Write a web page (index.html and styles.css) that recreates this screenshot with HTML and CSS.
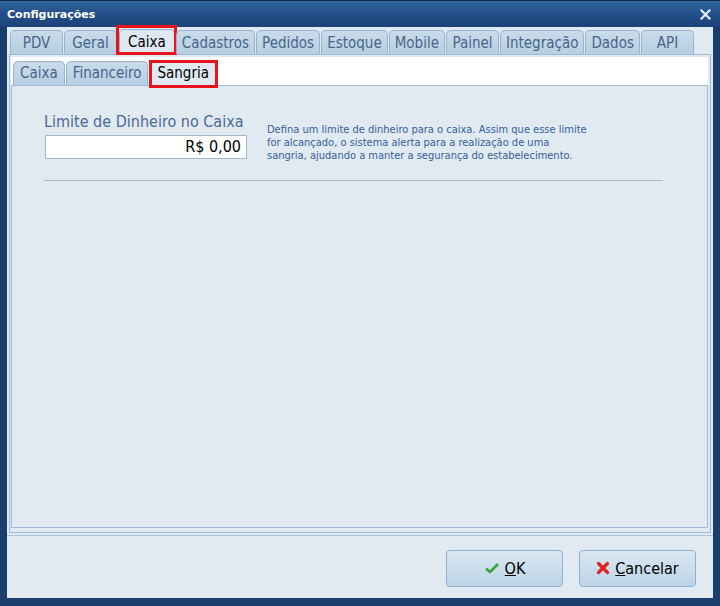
FILE: index.html
```html
<!DOCTYPE html>
<html lang="pt-BR">
<head>
    <meta charset="UTF-8">
    <title>Configurações</title>
    <link rel="stylesheet" href="styles.css">
</head>
<body>
<div class="window">
    <div class="titlebar">
        <span class="title">Configurações</span>
        <svg class="close" width="11" height="11" viewBox="0 0 11 11"><path d="M1.5 1.5 L9.5 9.5 M9.5 1.5 L1.5 9.5" stroke="#e8eef5" stroke-width="2.2" stroke-linecap="square"/></svg>
    </div>
    <div class="client">
        <div class="tabs">
            <span class="tab">PDV</span>
            <span class="tab">Geral</span>
            <span class="tab active mark">Caixa</span>
            <span class="tab">Cadastros</span>
            <span class="tab">Pedidos</span>
            <span class="tab">Estoque</span>
            <span class="tab">Mobile</span>
            <span class="tab">Painel</span>
            <span class="tab">Integração</span>
            <span class="tab">Dados</span>
            <span class="tab">API</span>
        </div>
        <div class="panel">
            <div class="subtabs">
                <span class="subtab">Caixa</span>
                <span class="subtab">Financeiro</span>
                <span class="subtab active mark">Sangria</span>
            </div>
            <div class="subpanel">
                <div class="row">
                    <div class="field">
                        <label class="label">Limite de Dinheiro no Caixa</label>
                        <div class="input">R$ 0,00</div>
                    </div>
                    <p class="hint">Defina um limite de dinheiro para o caixa. Assim que esse limite<br>for alcançado, o sistema alerta para a realização de uma<br>sangria, ajudando a manter a segurança do estabelecimento.</p>
                </div>
                <div class="sep"></div>
            </div>
        </div>
        <div class="footer">
            <button class="btn">
                <svg width="16" height="14" viewBox="0 0 16 14"><path d="M2 7.5 L6 11 L14 3" fill="none" stroke="#3aa535" stroke-width="2.6" stroke-linejoin="round"/></svg>
                <span><u>O</u>K</span>
            </button>
            <button class="btn">
                <svg width="14" height="14" viewBox="0 0 14 14"><path d="M2.5 2.5 L11.5 11.5 M11.5 2.5 L2.5 11.5" fill="none" stroke="#e0231e" stroke-width="3.2" stroke-linecap="round"/></svg>
                <span><u>C</u>ancelar</span>
            </button>
        </div>
    </div>
</div>
</body>
</html>
```

FILE: styles.css
```css
*{
    margin: 0;
    padding: 0;
    box-sizing: border-box;
}
body{
    background-color: #1b3d6b;
    font-family: "DejaVu Sans Condensed", "DejaVu Sans", sans-serif;
}
.window{
    width: 720px;
    height: 606px;
    display: flex;
    flex-direction: column;
    background-color: #1b3d6b;
    border-top: 1px solid #0f2a50;
}
.titlebar{
    height: 26px;
    display: flex;
    align-items: center;
    justify-content: space-between;
    padding: 0 9px 0 7px;
    background: linear-gradient(#3467a0, #24508a 45%, #1c4379);
}
.title{
    color: white;
    font-family: "DejaVu Sans", sans-serif;
    font-weight: bold;
    font-size: 11px;
}
.client{
    flex: 1;
    margin: 0 7px 8px 7px;
    background-color: #e1e9f1;
    display: flex;
    flex-direction: column;
}
.tabs{
    display: flex;
    padding: 3px 0 0 3px;
    height: 27px;
}
.tab{
    position: relative;
    min-width: 53px;
    height: 24px;
    padding: 0 5px;
    margin-right: 1px;
    text-align: center;
    font-size: 15px;
    line-height: 24px;
    color: #46648a;
    background: linear-gradient(#c9dbe9, #b7cfe2);
    border: 1px solid #93b3cf;
    border-bottom: none;
    border-radius: 5px 5px 0 0;
}
.tab.active{
    background: #dfe8f1;
    color: black;
    height: 25px;
    padding: 0 8px;
    margin: -1px 1px 0 1px;
}
/* red highlight box drawn over the tab */
.mark::after{
    content: "";
    position: absolute;
    border: 3px solid #e8141c;
}
.tab.mark::after{
    top: -5px;
    left: -4px;
    right: -3px;
    bottom: -1px;
}
.subtab.mark::after{
    top: -2px;
    left: -2px;
    right: -3px;
    bottom: -3px;
}
.panel{
    flex: 1;
    margin: 0 2px 0 2px;
    border: 1px solid #9dbbd6;
    padding: 2px 2px 4px 1px;
    display: flex;
    flex-direction: column;
}
.subtabs{
    background-color: white;
    height: 28px;
    display: flex;
    align-items: flex-end;
    padding-left: 2px;
}
.subtab{
    position: relative;
    height: 24px;
    padding: 0 6px;
    margin-right: 1px;
    font-size: 15px;
    line-height: 23px;
    color: #46648a;
    background: linear-gradient(#c9dbe9, #b7cfe2);
    border: 1px solid #93b3cf;
    border-bottom: none;
    border-radius: 5px 5px 0 0;
}
.subtab.active{
    background: #e1e9f1;
    color: black;
    margin-left: 1px;
}
.subpanel{
    flex: 1;
    background-color: #e1e9f1;
    border: 1px solid #9dbbd6;
    padding: 26px 0 0 32px;
}
.row{
    display: flex;
}
.field{
    width: 203px;
}
.label{
    display: block;
    font-size: 16px;
    line-height: 20px;
    color: #4a6a96;
    height: 23px;
}
.input{
    height: 24px;
    background-color: white;
    border: 1px solid #9fb8d0;
    text-align: right;
    padding-right: 5px;
    font-size: 16px;
    line-height: 22px;
    color: black;
    margin-left: 1px;
}
.hint{
    margin: 11px 0 0 20px;
    font-size: 11px;
    line-height: 13px;
    color: #33609a;
}
.sep{
    width: 619px;
    margin-top: 18px;
    border-top: 1px solid #a3bdd6;
}
.footer{
    height: 63px;
    border-top: 1px solid #a8c2da;
    margin-top: 2px;
    display: flex;
    justify-content: flex-end;
    align-items: center;
    gap: 16px;
    padding: 2px 17px 0 0;
}
.btn{
    width: 117px;
    height: 37px;
    display: flex;
    align-items: center;
    justify-content: center;
    gap: 5px;
    border: 1px solid #8fb0d0;
    border-radius: 4px;
    background: linear-gradient(#dae7f2, #bcd4e7);
    font-family: "DejaVu Sans Condensed", "DejaVu Sans", sans-serif;
    font-size: 16px;
    color: black;
}
```
